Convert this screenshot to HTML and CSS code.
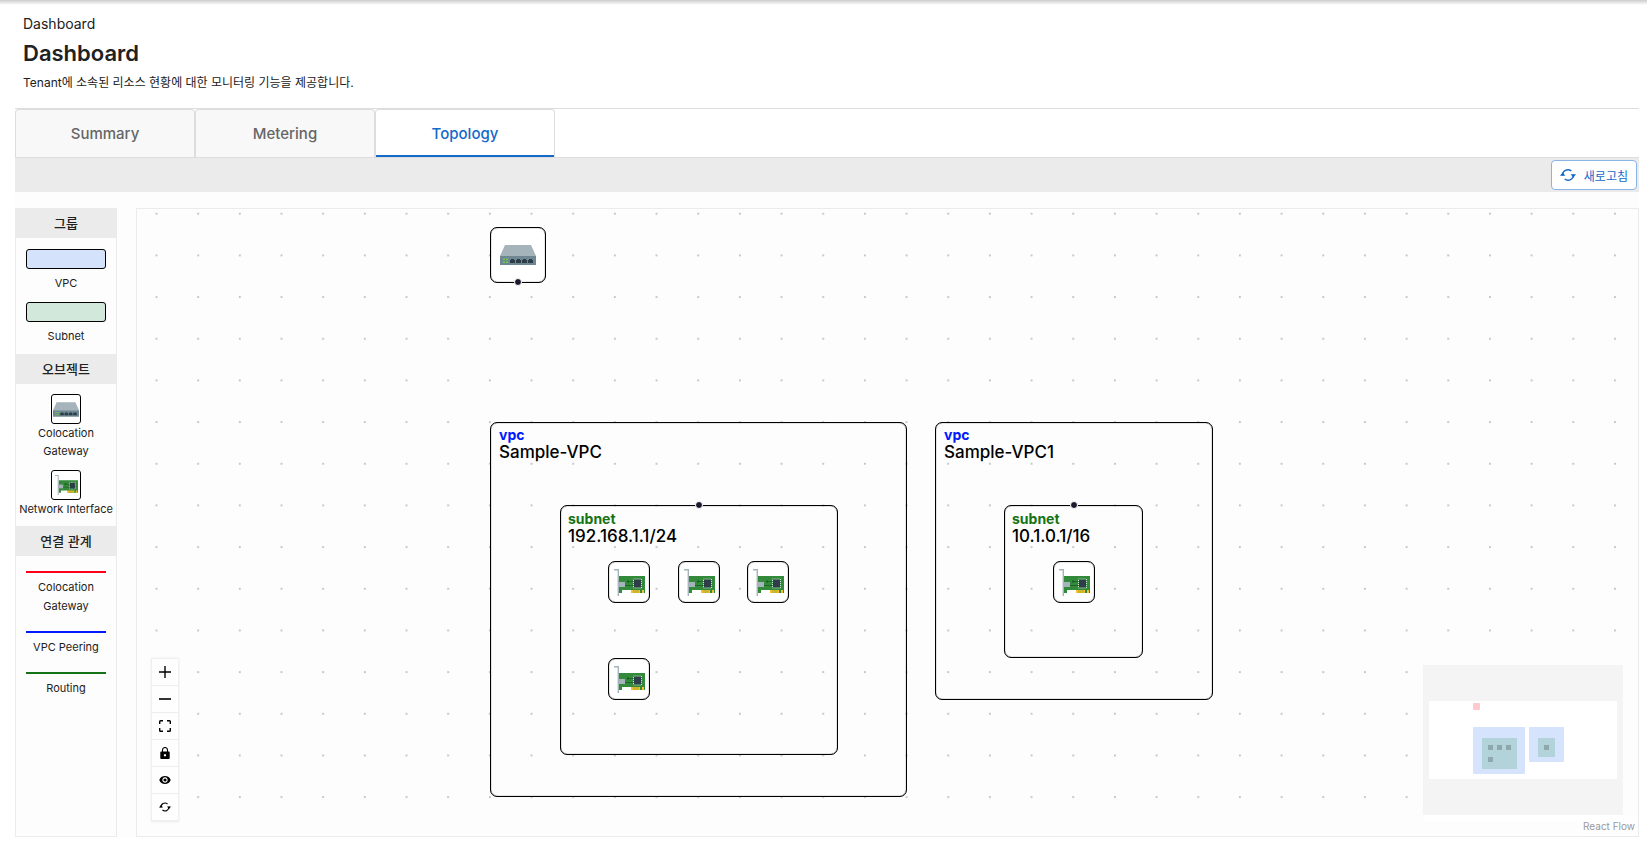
FILE: index.html
```html
<!DOCTYPE html>
<html lang="ko">
<head>
<meta charset="utf-8">
<title>Dashboard</title>
<link rel="stylesheet" href="styles.css">
</head>
<body>
<svg class="defs" aria-hidden="true">
  <symbol id="refresh" viewBox="0 0 24 24">
    <path fill="none" stroke="currentColor" stroke-width="2.2" d="M4 13a8 8 0 0 1 13-7M20 11a8 8 0 0 1-13 7"/>
    <path fill="currentColor" d="M0 13h8l-4-5zM16 11h8l-4 5z"/>
  </symbol>
  <symbol id="gateway" viewBox="0 0 36 20">
    <path fill="#a5b3ba" d="M5 0h26l5 11H0z"/>
    <path fill="#6f8792" d="M0 11h36v9H0z"/>
    <path fill="#6fce45" d="M3 13.500h2v1.500H3zM6 13.500h2v1.500H6zM3 16.500h2v1.500H3zM6 16.500h2v1.500H6z"/>
    <path fill="#2e3e48" d="M10 18v-3h1v-1h3v1h1v3zM16 18v-3h1v-1h3v1h1v3zM22 18v-3h1v-1h3v1h1v3zM28 18v-3h1v-1h3v1h1v3z"/>
  </symbol>
  <symbol id="nic" viewBox="0 0 31 27">
    <path fill="#338a3a" d="M5 7h26v17H17v-3H8v3H5z"/>
    <path fill="#f5c02c" d="M17 21h9v3h-9zM28 21h2v3h-2z"/>
    <path stroke="#338a3a" stroke-width=".4" d="M20 21v3M22 21v3M24 21v3"/>
    <path fill="none" stroke="#a5b3ba" stroke-width="1.4" d="M0 .8h4.3V27"/>
    <path fill="#a5b3ba" d="M4 13h7v5H4z"/>
    <path fill="none" stroke="#1a5c24" stroke-width=".8" d="M13 12.500h6M11 16.500h8"/>
    <path fill="#1a5c24" d="M13 11.500h2v2h-2z"/>
    <path fill="#2e3e48" d="M20 10.500h7v8h-7z"/>
    <path fill="none" stroke="#dfe6e8" stroke-width=".9" stroke-dasharray="1 1" d="M19.500 10h8v9h-8z"/>
  </symbol>
</svg>

<header class="page-header">
  <nav class="breadcrumb">Dashboard</nav>
  <h1 class="title">Dashboard</h1>
  <p class="description">Tenant에 소속된 리소스 현황에 대한 모니터링 기능을 제공합니다.</p>
</header>

<main class="content">
  <div class="tabs" role="tablist">
    <button class="tab" role="tab">Summary</button>
    <button class="tab" role="tab">Metering</button>
    <button class="tab tab-active" role="tab" aria-selected="true">Topology</button>
  </div>
  <div class="toolbar">
    <button class="reload"><svg class="reload-icon" aria-hidden="true"><use href="#refresh"/></svg>새로고침</button>
  </div>
  <div class="workspace">
    <aside class="legend">
      <h2 class="legend-title">그룹</h2>
      <div class="legend-group">
        <div class="legend-item swatch-item"><span class="swatch swatch-vpc"></span><span>VPC</span></div>
        <div class="legend-item swatch-item"><span class="swatch swatch-subnet"></span><span>Subnet</span></div>
      </div>
      <h2 class="legend-title">오브젝트</h2>
      <div class="legend-group objects">
        <div class="legend-item"><span class="object-box"><svg class="object-gateway"><use href="#gateway"/></svg></span><span>Colocation<br>Gateway</span></div>
        <div class="legend-item"><span class="object-box"><svg class="object-nic"><use href="#nic"/></svg></span><span class="nowrap">Network Interface</span></div>
      </div>
      <h2 class="legend-title">연결 관계</h2>
      <div class="legend-group links">
        <div class="legend-item"><span class="line line-red"></span><span>Colocation<br>Gateway</span></div>
        <div class="legend-item"><span class="line line-blue"></span><span>VPC Peering</span></div>
        <div class="legend-item"><span class="line line-green"></span><span>Routing</span></div>
      </div>
    </aside>

    <section class="canvas" aria-label="Topology">
      <svg class="dots" aria-hidden="true">
        <defs><pattern id="dot-grid" x="-1.300" y="-16.100" width="41.670" height="41.670" patternUnits="userSpaceOnUse"><circle cx="20.800" cy="20.800" r=".8" fill="#81818a"/></pattern></defs>
        <rect width="100%" height="100%" fill="url(#dot-grid)"/>
      </svg>

      <div class="node gateway-node"><svg class="gateway-icon"><use href="#gateway"/></svg><i class="handle handle-bottom"></i></div>

      <div class="node group vpc-a"><b class="kind kind-vpc">vpc</b><span class="name">Sample-VPC</span></div>
      <div class="node group subnet subnet-a"><i class="handle handle-top"></i><b class="kind kind-subnet">subnet</b><span class="name">192.168.1.1/24</span></div>
      <div class="node nic nic-1"><svg class="nic-icon"><use href="#nic"/></svg></div>
      <div class="node nic nic-2"><svg class="nic-icon"><use href="#nic"/></svg></div>
      <div class="node nic nic-3"><svg class="nic-icon"><use href="#nic"/></svg></div>
      <div class="node nic nic-4"><svg class="nic-icon"><use href="#nic"/></svg></div>

      <div class="node group vpc-b"><b class="kind kind-vpc">vpc</b><span class="name">Sample-VPC1</span></div>
      <div class="node group subnet subnet-b"><i class="handle handle-top"></i><b class="kind kind-subnet">subnet</b><span class="name">10.1.0.1/16</span></div>
      <div class="node nic nic-5"><svg class="nic-icon"><use href="#nic"/></svg></div>

      <div class="controls">
        <button class="control" aria-label="Zoom in"><svg class="control-icon" viewBox="0 0 12 12"><path d="M5.300 0h1.400v5.300H12v1.400H6.700V12H5.300V6.700H0V5.300h5.300z"/></svg></button>
        <button class="control" aria-label="Zoom out"><svg class="control-icon" viewBox="0 0 12 12"><path d="M0 5.200h12v1.600H0z"/></svg></button>
        <button class="control" aria-label="Fit view"><svg class="control-icon" viewBox="0 0 12 12"><path fill="none" stroke="#000" stroke-width="1.400" d="M.7 4V1.500q0-.8.8-.8H4M8 .7h2.500q.8 0 .8.800V4M11.300 8v2.500q0 .8-.8.800H8M4 11.300H1.500q-.8 0-.8-.8V8"/></svg></button>
        <button class="control" aria-label="Lock"><svg class="control-icon" viewBox="0 0 12 12"><path fill="none" stroke="#000" stroke-width="1.100" d="M3.500 5V3a2.500 2.500 0 0 1 5 0v2"/><path fill-rule="evenodd" d="M2.200 4.500h7.600q.9 0 .9.900v5.700q0 .9-.9.900H2.200q-.9 0-.9-.9V5.400q0-.9.900-.9zM6 7a1.200 1.200 0 1 0 .01 0z"/></svg></button>
        <button class="control" aria-label="Visibility"><svg class="control-icon" viewBox="0 0 12 12"><path fill-rule="evenodd" d="M6 2C3.300 2 1.100 3.600.3 6c.8 2.400 3 4 5.700 4s4.900-1.600 5.700-4C10.900 3.600 8.700 2 6 2zM6 3.300a2.700 2.700 0 1 1-.01 0zM6 4.400a1.600 1.600 0 1 0 .01 0z"/></svg></button>
        <button class="control" aria-label="Refresh"><svg class="control-icon"><use href="#refresh"/></svg></button>
      </div>

      <div class="minimap">
        <svg class="minimap-drawing" viewBox="0 0 200 150">
          <path fill="#f4f4f4" d="M0 0h200v150H0z"/>
          <path fill="#fff" d="M6 36h188v78H6z"/>
          <rect x="50" y="38" width="7" height="7" rx="1" fill="#ffc9cf"/>
          <rect x="50" y="62" width="52" height="47" rx="1" fill="#d5e3fc"/>
          <rect x="106" y="62" width="35" height="35" rx="1" fill="#d5e3fc"/>
          <path fill="#b2d3da" d="M59 73h35v31H59zM115 73h17v19h-17z"/>
          <path fill="#8ea9ae" d="M65 80h5v5h-5zM74 80h5v5h-5zM83 80h5v5h-5zM65 92h5v5h-5zM121 80h5v5h-5z"/>
        </svg>
      </div>
      <a class="attribution" href="#">React Flow</a>
    </section>
  </div>
</main>
</body>
</html>
```
FILE: styles.css
```css
* { box-sizing: border-box; }
body {
  margin: 0;
  min-height: 100vh;
  display: flex;
  flex-direction: column;
  background: linear-gradient(#ccc, #fff 5px) no-repeat #fff;
  color: #212121;
  font-family: Inter, "Noto Sans CJK KR", sans-serif;
}
button { font-family: inherit; cursor: pointer; }
.defs { position: absolute; width: 0; height: 0; }

.page-header { padding: 12px 23px 15px; }
.breadcrumb { font-size: 14px; line-height: 24px; }
.title { margin: 0; font-size: 22px; line-height: 34px; font-weight: 600; }
.description { margin: 0; font-size: 12px; line-height: 22px; padding-top: 2px; }

.content { flex: 1; display: flex; flex-direction: column; padding: 0 8px 12px 15px; }
.tabs { display: flex; border-top: 1px solid #ddd; border-bottom: 1px solid #ddd; margin-top: -1px; }
.tab {
  width: 180px;
  height: 48px;
  border: 1px solid #ddd;
  border-bottom: 0;
  border-radius: 4px 4px 0 0;
  background: #f8f8f8;
  color: #666;
  font-size: 15px;
  font-weight: 500;
}
.tab-active {
  background: linear-gradient(#1469c9, #1469c9) bottom / 100% 2px no-repeat border-box #fff;
  color: #1469c9;
}
.toolbar {
  display: flex;
  justify-content: flex-end;
  padding: 2px;
  background: #ebebeb;
}
.reload {
  display: flex;
  align-items: center;
  gap: 8px;
  height: 30px;
  padding: 0 8px;
  border: 1px solid #8ab4e4;
  border-radius: 4px;
  background: #fff;
  color: #1469c9;
  font-size: 12px;
  font-weight: 400;
}
.reload-icon { width: 16px; height: 16px; }

.workspace { flex: 1; display: flex; gap: 19px; padding-top: 16px; background: #fdfdfd; }
.legend {
  width: 102px;
  flex: none;
  border: 1px solid #ebebeb;
  border-top: 0;
  text-align: center;
  font-size: 11px;
  line-height: 18px;
}
.legend-title { margin: 0; background: #ebebeb; font-size: 13px; line-height: 30px; font-weight: 500; }
.legend-group { display: flex; flex-direction: column; padding: 11px 0 9px; gap: 10px; }
.legend-item { display: flex; flex-direction: column; align-items: center; }
.swatch-item { gap: 5px; }
.nowrap { white-space: nowrap; }
.swatch { width: 80px; height: 20px; border: 1px solid #000; border-radius: 3px; }
.swatch-vpc { background: #d4e2fb; }
.swatch-subnet { background: #d1e8da; }
.objects { padding: 10px 0 8px; }
.object-box {
  display: flex;
  align-items: center;
  justify-content: center;
  width: 30px;
  height: 30px;
  border: 1px solid #000;
  border-radius: 3px;
  background: #fff;
}
.object-gateway { width: 26px; height: 15px; }
.object-nic { width: 23px; height: 20px; }
.links { padding-top: 15px; gap: 15px; line-height: 19px; }
.links .legend-item { gap: 5px; }
.line { width: 80px; height: 2px; }
.line-red { background: #ff0019; }
.line-blue { background: #0019ff; }
.line-green { background: #147314; }

.canvas { position: relative; flex: 1; border: 1px solid #ebebeb; overflow: hidden; }
.dots { position: absolute; inset: 0; width: 100%; height: 100%; }

.node { position: absolute; border: 1px solid #000; border-radius: 7px; box-shadow: inset 0 0 1px #000; }
.group { padding: 3px 8px; color: #000; }
.subnet { padding: 4px 7px; }
.kind { display: block; font-size: 14px; line-height: 17px; font-weight: 700; }
.kind-vpc { color: #0019ff; }
.kind-subnet { color: #147314; }
.name { display: block; font-size: 17px; line-height: 18px; font-weight: 500; }
.gateway-node, .nic { display: flex; align-items: center; justify-content: center; background: #fff; }
.gateway-node { left: 353px; top: 18px; width: 56px; height: 56px; }
.gateway-icon { width: 36px; height: 20px; }
.nic { width: 42px; height: 42px; }
.nic-icon { width: 31px; height: 27px; }
.vpc-a { left: 353px; top: 213px; width: 417px; height: 375px; }
.vpc-b { left: 798px; top: 213px; width: 278px; height: 278px; }
.subnet-a { left: 423px; top: 296px; width: 278px; height: 250px; }
.subnet-b { left: 867px; top: 296px; width: 139px; height: 153px; }
.nic-1 { left: 471px; top: 352px; }
.nic-2 { left: 541px; top: 352px; }
.nic-3 { left: 610px; top: 352px; }
.nic-4 { left: 471px; top: 449px; }
.nic-5 { left: 916px; top: 352px; }
.handle {
  position: absolute;
  left: 50%;
  width: 8px;
  height: 8px;
  margin: -4px;
  border: 1px solid #fff;
  border-radius: 50%;
  background: #1a192b;
}
.handle-top { top: -1px; }
.handle-bottom { top: 100%; }

.controls { position: absolute; left: 15px; bottom: 15px; box-shadow: 0 0 2px 1px rgba(0, 0, 0, .08); }
.control {
  display: flex;
  align-items: center;
  justify-content: center;
  width: 26px;
  height: 27px;
  padding: 0;
  border: 0;
  border-bottom: 1px solid #eee;
  background: #fefefe;
  color: #000;
}
.control-icon { width: 12px; height: 12px; }
.minimap { position: absolute; right: 15px; bottom: 15px; width: 200px; height: 156px; background: #fff; }
.minimap-drawing { display: block; width: 200px; height: 150px; }
.attribution {
  position: absolute;
  right: 0;
  bottom: 0;
  padding: 2px 3px;
  background: rgba(255, 255, 255, .5);
  color: #999;
  font-size: 10px;
  line-height: 15px;
  text-decoration: none;
}
```
